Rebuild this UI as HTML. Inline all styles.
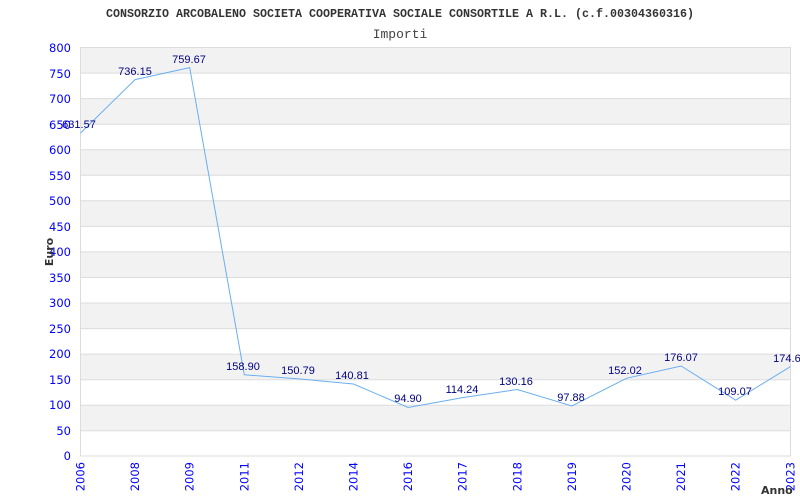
<!DOCTYPE html>
<html><head><meta charset="utf-8"><style>html,body{margin:0;padding:0;background:#fff;width:800px;height:500px;overflow:hidden}</style></head>
<body>
<svg width="800" height="500" xmlns="http://www.w3.org/2000/svg">
<g fill="#f2f2f2">
<rect x="80.5" y="47.5" width="710" height="25.6"/>
<rect x="80.5" y="98.6" width="710" height="25.6"/>
<rect x="80.5" y="149.7" width="710" height="25.6"/>
<rect x="80.5" y="200.8" width="710" height="25.6"/>
<rect x="80.5" y="251.9" width="710" height="25.6"/>
<rect x="80.5" y="303.0" width="710" height="25.6"/>
<rect x="80.5" y="354.1" width="710" height="25.6"/>
<rect x="80.5" y="405.2" width="710" height="25.6"/>
</g>
<g stroke="#dcdcdc" stroke-width="1">
<line x1="80.5" y1="73.1" x2="790.5" y2="73.1"/><line x1="80.5" y1="98.6" x2="790.5" y2="98.6"/>
<line x1="80.5" y1="124.2" x2="790.5" y2="124.2"/><line x1="80.5" y1="149.7" x2="790.5" y2="149.7"/>
<line x1="80.5" y1="175.3" x2="790.5" y2="175.3"/><line x1="80.5" y1="200.8" x2="790.5" y2="200.8"/>
<line x1="80.5" y1="226.4" x2="790.5" y2="226.4"/><line x1="80.5" y1="251.9" x2="790.5" y2="251.9"/>
<line x1="80.5" y1="277.5" x2="790.5" y2="277.5"/><line x1="80.5" y1="303.0" x2="790.5" y2="303.0"/>
<line x1="80.5" y1="328.6" x2="790.5" y2="328.6"/><line x1="80.5" y1="354.1" x2="790.5" y2="354.1"/>
<line x1="80.5" y1="379.7" x2="790.5" y2="379.7"/><line x1="80.5" y1="405.2" x2="790.5" y2="405.2"/>
<line x1="80.5" y1="430.8" x2="790.5" y2="430.8"/>
<rect x="80.5" y="47.5" width="710" height="408.5" fill="none"/>
</g>
<polyline fill="none" stroke="#6aaef0" stroke-width="1" points="80.5,133.1 135.1,79.6 189.7,67.6 244.3,374.8 298.9,378.9 353.5,384.0 408.1,407.5 462.7,397.6 517.3,389.5 571.9,406.0 626.5,378.3 681.1,366.0 735.7,400.2 790.3,366.7"/>
<g font-family="Liberation Sans, sans-serif" font-size="11" fill="#000080" text-anchor="middle">
<text x="79" y="128">631.57</text><text x="135" y="75">736.15</text><text x="189" y="63">759.67</text>
<text x="243" y="370">158.90</text><text x="298" y="374">150.79</text><text x="352" y="379">140.81</text>
<text x="408" y="402">94.90</text><text x="462" y="393">114.24</text><text x="516" y="385">130.16</text>
<text x="571" y="401">97.88</text><text x="625" y="374">152.02</text><text x="681" y="361">176.07</text>
<text x="735" y="395">109.07</text><text x="790" y="362">174.63</text>
</g>
<g font-family="DejaVu Sans, sans-serif" font-size="11.5" fill="#0000ff" text-anchor="end">
<text x="71" y="52">800</text><text x="71" y="78">750</text><text x="71" y="103">700</text><text x="71" y="129">650</text>
<text x="71" y="154">600</text><text x="71" y="180">550</text><text x="71" y="205">500</text><text x="71" y="231">450</text>
<text x="71" y="256">400</text><text x="71" y="282">350</text><text x="71" y="307">300</text><text x="71" y="333">250</text>
<text x="71" y="358">200</text><text x="71" y="384">150</text><text x="71" y="409">100</text><text x="71" y="435">50</text>
<text x="71" y="460">0</text>
</g>
<g font-family="DejaVu Sans, sans-serif" font-size="11.5" fill="#0000ff" text-anchor="end">
<text transform="translate(84.5,462) rotate(-90)">2006</text>
<text transform="translate(139.1,462) rotate(-90)">2008</text>
<text transform="translate(193.7,462) rotate(-90)">2009</text>
<text transform="translate(248.3,462) rotate(-90)">2011</text>
<text transform="translate(302.9,462) rotate(-90)">2012</text>
<text transform="translate(357.5,462) rotate(-90)">2014</text>
<text transform="translate(412.1,462) rotate(-90)">2016</text>
<text transform="translate(466.7,462) rotate(-90)">2017</text>
<text transform="translate(521.3,462) rotate(-90)">2018</text>
<text transform="translate(575.9,462) rotate(-90)">2019</text>
<text transform="translate(630.5,462) rotate(-90)">2020</text>
<text transform="translate(685.1,462) rotate(-90)">2021</text>
<text transform="translate(739.7,462) rotate(-90)">2022</text>
<text transform="translate(794.3,462) rotate(-90)">2023</text>
</g>
<text x="106" y="17" font-family="Liberation Mono, monospace" font-weight="bold" font-size="12" fill="#333" textLength="588" lengthAdjust="spacingAndGlyphs">CONSORZIO ARCOBALENO SOCIETA COOPERATIVA SOCIALE CONSORTILE A R.L. (c.f.00304360316)</text>
<text x="400" y="38" font-family="Liberation Mono, monospace" font-size="13" fill="#444" text-anchor="middle">Importi</text>
<text transform="translate(53,252) rotate(-90)" font-family="DejaVu Sans, sans-serif" font-weight="bold" font-size="11" fill="#333" text-anchor="middle">Euro</text>
<text x="761" y="494" font-family="DejaVu Sans, sans-serif" font-weight="bold" font-size="11" fill="#333">Anno</text>
</svg>
</body></html>
